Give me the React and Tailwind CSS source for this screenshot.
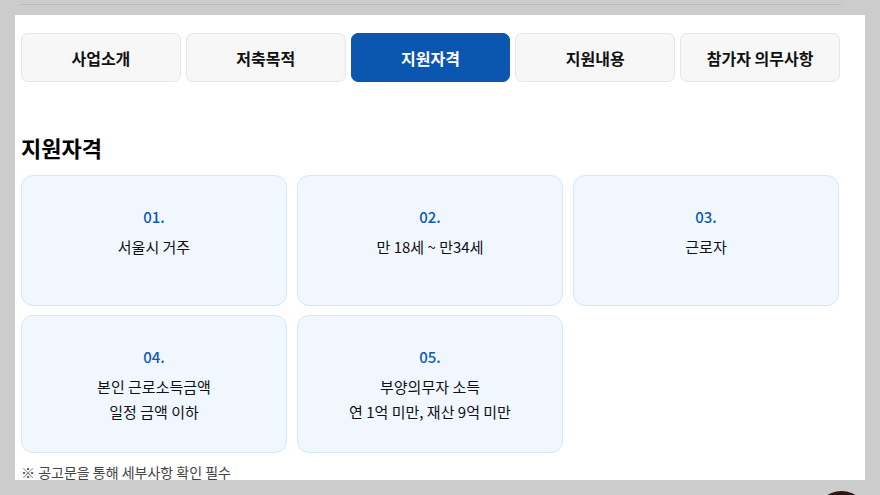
const tabs = ['사업소개', '저축목적', '지원자격', '지원내용', '참가자 의무사항']

const items = [
  { no: '01.', lines: ['서울시 거주'] },
  { no: '02.', lines: ['만 18세 ~ 만34세'] },
  { no: '03.', lines: ['근로자'] },
  { no: '04.', lines: ['본인 근로소득금액', '일정 금액 이하'] },
  { no: '05.', lines: ['부양의무자 소득', '연 1억 미만, 재산 9억 미만'] },
]

export default function App() {
  return (
    <div className="relative h-[495px] overflow-hidden bg-[#cccccc] font-['Noto_Sans_CJK_KR','Noto_Sans',sans-serif]">
      {/* top divider */}
      <div className="h-[15px] px-[21px] pt-[4px]">
        <div className="w-[820px] border-t border-[#b9b9b9]" />
      </div>

      <div className="mx-[15px] h-[465px] w-[850px] overflow-hidden bg-white pl-[6px] pt-[18px]">
        <nav className="grid w-[819px] grid-cols-5 gap-[5px]">
          {tabs.map((t) => {
            const active = t === '지원자격'
            return (
              <button
                key={t}
                type="button"
                className={
                  active
                    ? 'h-[49px] rounded-[7px] border border-[#0b57b0] bg-[#0b57b0] text-[16px] font-bold text-white'
                    : 'h-[49px] rounded-[7px] border border-[#e6e6e6] bg-[#f7f7f7] text-[16px] font-bold text-[#111]'
                }
              >
                {t}
              </button>
            )
          })}
        </nav>

        <h2 className="mt-[49px] text-[22px] font-bold leading-[32px] text-black">지원자격</h2>

        <div className="mt-[12px] grid w-[818px] grid-cols-3 gap-x-[10px] gap-y-[9px]">
          {items.map((it) => (
            <div
              key={it.no}
              className="min-h-[131px] rounded-[12px] border border-[#d5e7f7] bg-[#f0f7ff] px-4 pb-[28px] pt-[30px] text-center"
            >
              <p className="text-[15px] font-medium leading-[22px] text-[#0d5bb5]">{it.no}</p>
              <div className="mt-1.5 text-[15px] leading-[25px] text-[#111]">
                {it.lines.map((l) => (
                  <p key={l}>{l}</p>
                ))}
              </div>
            </div>
          ))}
        </div>

        <p className="mt-[9px] text-[14px] leading-[20px] text-[#444]">※ 공고문을 통해 세부사항 확인 필수</p>
      </div>

      <div className="absolute left-[815px] top-[491px] h-[53px] w-[53px] rounded-full bg-[#2b1515]" />
    </div>
  )
}
